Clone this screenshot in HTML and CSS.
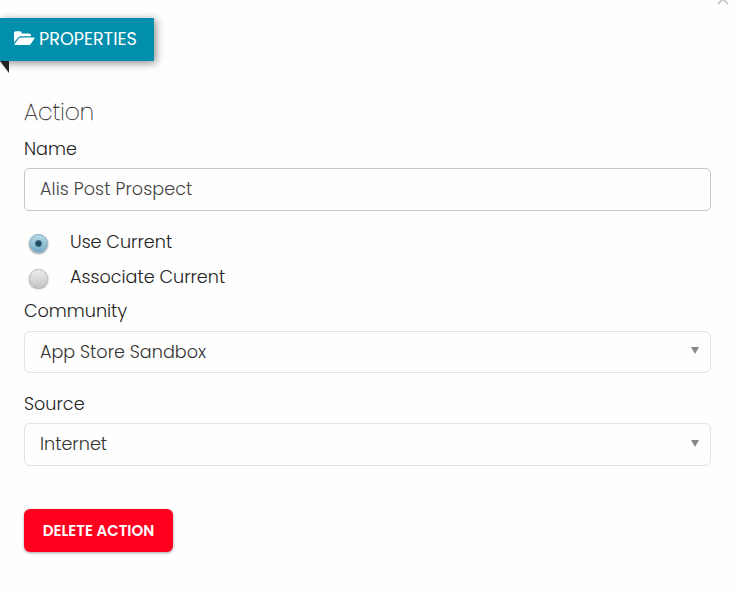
FILE: index.html
```html
<!DOCTYPE html>
<html lang="en">
  <head>
    <meta charset="UTF-8" />
    <meta name="viewport" content="width=device-width, initial-scale=1.0" />
    <title>Properties</title>
    <link rel="stylesheet" href="styles.css">
  </head>
  <body>
    <div class="panel">
      <svg class="close" viewBox="0 0 12 12">
        <path d="M1 1L11 11M11 1L1 11" />
      </svg>
      <div class="ribbon">
        <svg class="folder" viewBox="0 0 21 15">
          <path d="M0 11.6V2Q0 .3 1.7 .3H6Q7.6 .3 7.6 2V2.5H15.2Q17 2.5 17 4.2V5.3H7Q5.2 5.3 4 6.7Z" />
          <path d="M.4 13.2L4.8 7.5Q5.7 6.4 7.2 6.4H20Q21.2 6.4 20.5 7.5L16.9 12.8Q16.1 14 14.6 14H1Q0 14 .4 13.2Z" />
        </svg>
        <span class="ribbon-title">PROPERTIES</span>
      </div>
      <form class="action-form">
        <h3>Action</h3>
        <label class="field-label name-label" for="name">Name</label>
        <input type="text" id="name" class="text-input" value="Alis Post Prospect" />
        <div class="radios">
          <label class="radio-row">
            <input type="radio" name="mode" class="radio" checked />
            <span>Use Current</span>
          </label>
          <label class="radio-row">
            <input type="radio" name="mode" class="radio" />
            <span>Associate Current</span>
          </label>
        </div>
        <div class="field-label community-label">Community</div>
        <div class="select community">
          <span>App Store Sandbox</span>
          <i class="arrow"></i>
        </div>
        <div class="field-label source-label">Source</div>
        <div class="select source">
          <span>Internet</span>
          <i class="arrow"></i>
        </div>
        <button type="button" class="delete-btn">DELETE ACTION</button>
      </form>
    </div>
  </body>
</html>
```
FILE: styles.css
```css
* {
  box-sizing: border-box;
}
body {
  margin: 0;
  background: #fefefe;
  color: #222;
  font-family: Poppins, Inter, "Open Sans", sans-serif;
  font-size: 17.6px;
  font-weight: 300;
}
.panel {
  position: relative;
  height: 592px;
  padding-top: 18px;
  overflow: hidden;
}
.close {
  position: absolute;
  top: -7px;
  right: 9px;
  width: 12px;
  height: 12px;
  fill: none;
  stroke: #ccc;
  stroke-width: 2;
}
.ribbon {
  position: relative;
  display: flex;
  align-items: center;
  width: 154px;
  height: 43px;
  padding: 0 0 2px 14px;
  background: #028fad;
  color: #fff;
  box-shadow: 2px 2px 8px rgba(0, 0, 0, 0.45);
}
/* folded corner under the ribbon */
.ribbon::after {
  content: "";
  position: absolute;
  top: 100%;
  left: 0;
  border-top: 12px solid #222;
  border-left: 9px solid transparent;
}
.folder {
  width: 21px;
  height: 15px;
  margin-right: 4px;
  fill: #fff;
}
.ribbon-title {
  font-weight: 400;
}
.action-form {
  display: flex;
  flex-direction: column;
  padding: 36px 27px 0 24px;
}
h3 {
  margin: 0;
  font-size: 23.2px;
  font-weight: 200;
  line-height: 30px;
  -webkit-text-stroke: 0.3px #222;
}
.field-label {
  line-height: 24px;
}
.name-label {
  margin: 10px 0 7px;
}
.text-input {
  width: 100%;
  height: 43px;
  padding: 0 15px 1px;
  border: 1px solid #c6c6c6;
  border-radius: 5px;
  background: #fefefe;
  color: #444;
  font: inherit;
  letter-spacing: 0.08px;
  outline: none;
}
.radios {
  margin: 13px 0 1px;
}
.radio-row {
  display: flex;
  align-items: center;
  height: 35px;
  padding-left: 5px;
}
.radio {
  appearance: none;
  width: 19px;
  height: 19px;
  margin: 3px 22px 0 0;
  border: 1px solid #bbb;
  border-radius: 50%;
  background: linear-gradient(#ececec, #c8c8c8);
  box-shadow: 0 1px 2px rgba(0, 0, 0, 0.45);
}
.radio:checked {
  border-color: #7faabd;
  background: radial-gradient(circle, #244b5d 0 2px, #3d6c80 3px, transparent 4px), linear-gradient(#b8dbea, #73abc4);
}
.community-label {
  margin: 4px 0 8px;
}
.select {
  display: flex;
  align-items: center;
  justify-content: space-between;
  height: 42px;
  padding: 0 11px 0 15px;
  border: 1px solid #e2e2e2;
  border-radius: 6px;
  color: #333;
}
.arrow {
  margin-top: -3px;
  border-top: 7px solid #888;
  border-left: 4.5px solid transparent;
  border-right: 4.5px solid transparent;
}
.source-label {
  margin: 19px 0 7px;
}
.source {
  height: 43px;
  padding-bottom: 1px;
}
.source .arrow {
  margin-top: -1px;
}
.delete-btn {
  width: 149px;
  height: 43px;
  margin-top: 43px;
  padding: 0;
  border: none;
  border-radius: 6px;
  background: #ff001f;
  box-shadow: 0 1px 3px rgba(0, 0, 0, 0.35);
  color: #fff;
  font-family: inherit;
  font-size: 15px;
  font-weight: 600;
}
```
